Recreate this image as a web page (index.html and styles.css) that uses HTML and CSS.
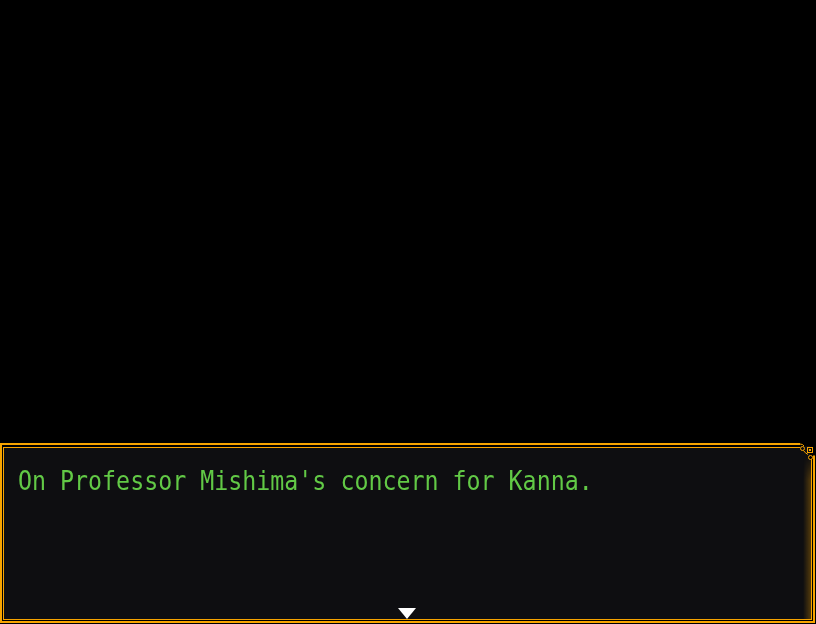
FILE: index.html
```html
<!DOCTYPE html>
<html>
<head>
<meta charset="utf-8">
<link rel="stylesheet" href="styles.css">
</head>
<body>
<div class="screen">
  <div class="window">
    <div class="inner">
      <p class="msg"><span class="line">On Professor Mishima's concern for Kanna.</span></p>
      <div class="glow"></div>
      <div class="arrow"></div>
    </div>
    <svg class="corner" width="18" height="20" viewBox="0 0 18 20">
      <rect x="3" y="0" width="15" height="13" fill="#000"/>
      <rect x="3" y="3" width="10" height="10" fill="#0e0e11"/>
      <path d="M0 1 H3" stroke="#f7a400" stroke-width="2"/>
      <path d="M3 1 Q6 1 7 3" fill="none" stroke="#f7a400" stroke-width="1"/>
      <circle cx="5.5" cy="5.5" r="2" fill="none" stroke="#f7a400" stroke-width="1"/>
      <path d="M6.5 7.5 Q8 10 11 11.5" fill="none" stroke="#f7a400" stroke-width="1"/>
      <rect x="10.5" y="4.5" width="5" height="5" fill="none" stroke="#f7a400" stroke-width="1"/>
      <rect x="12" y="6" width="2" height="2" fill="#f7a400"/>
      <circle cx="13.5" cy="14.5" r="2" fill="#000" stroke="#f7a400" stroke-width="1"/>
      <path d="M17 12.5 V20" stroke="#f7a400" stroke-width="2"/>
    </svg>
  </div>
</div>
</body>
</html>
```
FILE: styles.css
```css
html, body {
  margin: 0;
  padding: 0;
  background: #000;
}
.screen {
  width: 816px;
  height: 624px;
  box-sizing: border-box;
  padding: 0 1px 1px 0;
  display: flex;
  flex-direction: column;
  justify-content: flex-end;
  overflow: hidden;
}
.window {
  position: relative;
  height: 180px;
  box-sizing: border-box;
  border: 2px solid #f7a400;
  padding: 2px 1px 1px 1px;
  display: flex;
  flex-direction: column;
}
.inner {
  position: relative;
  flex: 1;
  border: 1px solid #f7a400;
  background: #0e0e11;
  padding: 17px 14px 0 14px;
}
.msg {
  margin: 0;
  font-family: "DejaVu Sans Mono", monospace;
  font-size: 27.4px;
  line-height: 32px;
  color: #62c946;
  white-space: nowrap;
}
.line {
  display: inline-block;
  transform: scaleX(0.85);
  transform-origin: 0 50%;
}
.glow {
  position: absolute;
  right: 0;
  top: 8px;
  bottom: 0;
  width: 8px;
  background: linear-gradient(to right, rgba(247,164,0,0), rgba(247,164,0,0.3));
  -webkit-mask-image: linear-gradient(to bottom, transparent, #000 24px);
  mask-image: linear-gradient(to bottom, transparent, #000 24px);
}
.arrow {
  position: absolute;
  left: 394px;
  bottom: 0;
  width: 0;
  height: 0;
  border-left: 9.5px solid transparent;
  border-right: 9.5px solid transparent;
  border-top: 11px solid #fff;
}
.corner {
  position: absolute;
  right: -2px;
  top: -2px;
  display: block;
}
```
